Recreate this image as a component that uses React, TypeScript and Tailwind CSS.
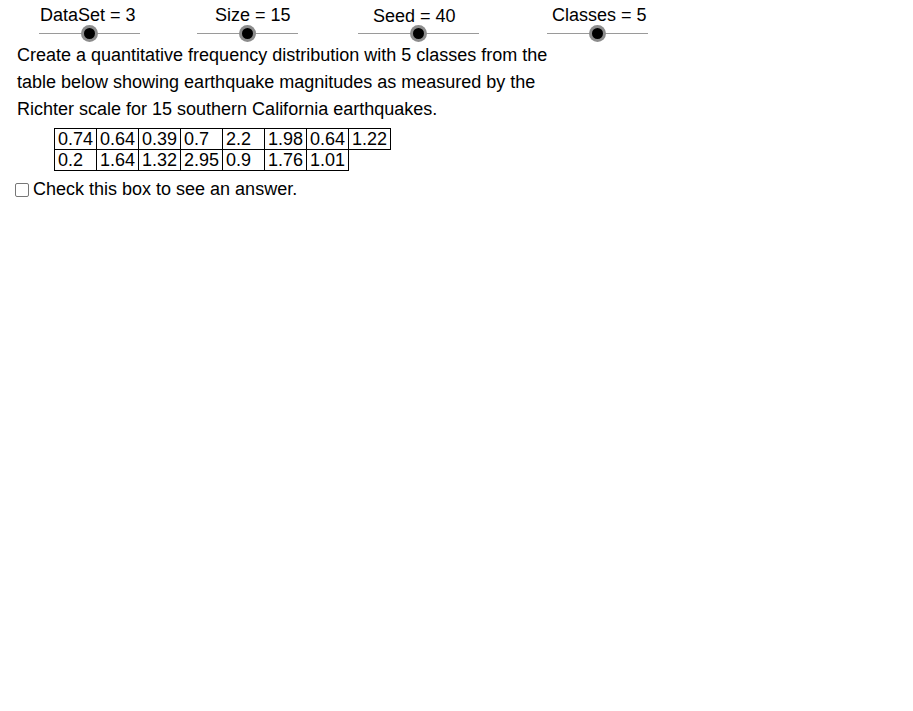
import React from 'react';

type SliderProps = {
  label: string;
  left: number;
  width: number;
  labelOffset: number;
  knob: number;
  labelTop?: number;
};

const sliders: SliderProps[] = [
  { label: 'DataSet = 3', left: 39, width: 101, labelOffset: 1, knob: 50 },
  { label: 'Size = 15', left: 197, width: 101, labelOffset: 18, knob: 50 },
  { label: 'Seed = 40', left: 358, width: 121, labelOffset: 15, knob: 60, labelTop: 1 },
  { label: 'Classes = 5', left: 547, width: 101, labelOffset: 5, knob: 50 },
];

const rows = [
  ['0.74', '0.64', '0.39', '0.7', '2.2', '1.98', '0.64', '1.22'],
  ['0.2', '1.64', '1.32', '2.95', '0.9', '1.76', '1.01'],
];

function Slider({ label, width, labelOffset, knob, labelTop }: SliderProps) {
  return (
    <div className="shrink-0" style={{ width }}>
      <div
        className="whitespace-nowrap text-[18px] leading-[21px] text-black"
        style={{ paddingLeft: labelOffset, paddingTop: labelTop ?? 0 }}
      >
        {label}
      </div>
      <div className="relative h-px bg-[#9a9a9a]" style={{ marginTop: 7 - (labelTop ?? 0) }}>
        {/* knob */}
        <div
          className="absolute top-[-8px] flex h-[17px] w-[17px] items-center justify-center rounded-full bg-[#8c8c8c]"
          style={{ left: knob - 8 }}
        >
          <div className="h-[11px] w-[11px] rounded-full bg-black" />
        </div>
      </div>
    </div>
  );
}

export default function App() {
  return (
    <div className="min-h-[711px] w-[913px] bg-white font-['Liberation_Sans',Arial,sans-serif] text-black">
      {/* Sliders */}
      <div className="flex pt-[5px]">
        {sliders.map((s, i) => (
          <div
            key={s.label}
            style={{ marginLeft: i === 0 ? s.left : s.left - (sliders[i - 1].left + sliders[i - 1].width) }}
          >
            <Slider {...s} />
          </div>
        ))}
      </div>

      {/* Question text */}
      <p className="ml-[17px] mt-[8px] text-[18px] leading-[27px]">
        Create a quantitative frequency distribution with 5 classes from the
        <br />
        table below showing earthquake magnitudes as measured by the
        <br />
        Richter scale for 15 southern California earthquakes.
      </p>

      {/* Data table */}
      <table className="ml-[54px] mt-[5px] border-collapse text-[18px] leading-[20px]">
        <tbody>
          {rows.map((row, r) => (
            <tr key={r}>
              {row.map((v, c) => (
                <td key={c} className="h-[21px] w-[42px] border border-black p-0 pl-[3px] text-left align-middle">
                  {v}
                </td>
              ))}
            </tr>
          ))}
        </tbody>
      </table>

      {/* Answer checkbox */}
      <label className="ml-[15px] mt-[8px] flex items-center text-[18px] leading-[21px]">
        <span className="mr-[4px] h-[14px] w-[14px] rounded-[2px] border border-[#777]" />
        Check this box to see an answer.
      </label>
    </div>
  );
}
